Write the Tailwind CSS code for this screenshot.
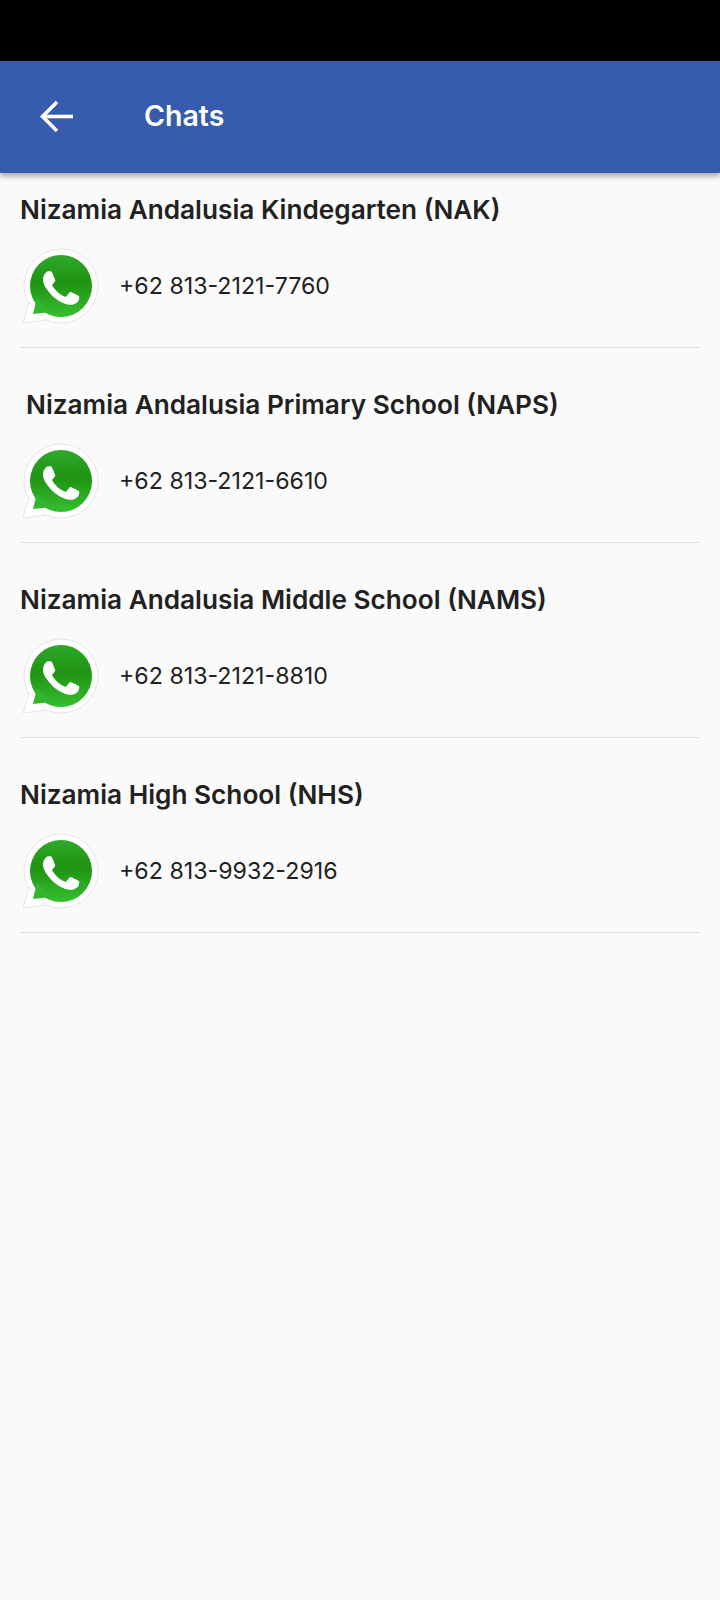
<!DOCTYPE html>
<html lang="en">
<head>
  <meta charset="UTF-8" />
  <meta name="viewport" content="width=device-width, initial-scale=1.0" />
  <title>Chats</title>
  <script src="https://cdn.jsdelivr.net/npm/@tailwindcss/browser@4"></script>
</head>
<body class="bg-[#fafafa] min-h-screen font-['Inter',sans-serif]">
  <svg width="0" height="0" class="absolute">
    <defs>
      <linearGradient id="wa-green" gradientUnits="userSpaceOnUse" x1="0" y1="9" x2="0" y2="71">
        <stop offset="0" stop-color="#2fa82a" />
        <stop offset="0.45" stop-color="#1f9312" />
        <stop offset="1" stop-color="#36bf31" />
      </linearGradient>
      <symbol id="wa" viewBox="0 0 80 80">
        <!-- white outer bubble -->
        <circle cx="41" cy="40" r="37" fill="#ffffff" stroke="#e6e6e6" stroke-width="1" />
        <path d="M3 77 L9 56 L26 74 Z" fill="#ffffff" stroke="#e6e6e6" stroke-width="1" stroke-linejoin="round" />
        <circle cx="41" cy="40" r="34" fill="#ffffff" />
        <path d="M10 60 L22 72 L8 74 Z" fill="#ffffff" />
        <!-- green bubble -->
        <circle cx="41" cy="40" r="31" fill="url(#wa-green)" />
        <path d="M13 68 L17 52 L31 66 Z" fill="#32b62d" />
        <g transform="translate(5 6) scale(3)">
          <path fill="#ffffff" d="M17.472 14.382c-.297-.149-1.758-.867-2.03-.967-.273-.099-.471-.148-.67.15-.197.297-.767.966-.94 1.164-.173.199-.347.223-.644.075-.297-.15-1.255-.463-2.39-1.475-.883-.788-1.48-1.761-1.653-2.059-.173-.297-.018-.458.13-.606.134-.133.298-.347.446-.52.149-.174.198-.298.298-.497.099-.198.05-.371-.025-.52-.075-.149-.669-1.612-.916-2.207-.242-.579-.487-.5-.669-.51-.173-.008-.371-.01-.57-.01-.198 0-.52.074-.792.372-.272.297-1.04 1.016-1.04 2.479 0 1.462 1.065 2.875 1.213 3.074.149.198 2.096 3.2 5.077 4.487.709.306 1.262.489 1.694.625.712.227 1.36.195 1.871.118.571-.085 1.758-.719 2.006-1.413.248-.694.248-1.289.173-1.413-.074-.124-.272-.198-.57-.347z" />
        </g>
      </symbol>
    </defs>
  </svg>

  <div class="h-[61px] bg-black"></div>

  <header class="h-[112px] bg-[#385cad] flex items-center shadow-[0_3px_6px_rgba(0,0,0,0.35)] relative">
    <svg class="ml-[40px] mb-[2px] w-[33px] h-[33px]" viewBox="0 0 33 33" fill="none" stroke="#ffffff" stroke-width="3.6">
      <path d="M33 16.5 H2.5" />
      <path d="M17 2 L2.5 16.5 L17 31" />
    </svg>
    <h1 class="ml-[71px] mb-[1px] text-[28.5px] font-semibold text-white leading-none">Chats</h1>
  </header>

  <main class="px-[20px]">
    <section class="h-[175px] border-b border-[#dcdcdc]">
      <h2 class="text-[26.2px] font-semibold text-[#212121] leading-[36px] pt-[19px] h-[54px]">Nizamia Andalusia Kindegarten (NAK)</h2>
      <div class="flex items-center mt-[19px]">
        <svg class="w-[80px] h-[80px]"><use href="#wa" /></svg>
        <span class="ml-[19px] text-[23.2px] text-[#212121]">+62 813-2121-7760</span>
      </div>
    </section>
    <section class="h-[195px] border-b border-[#dcdcdc] pt-[20px]">
      <h2 class="text-[26.2px] font-semibold text-[#212121] leading-[36px] pl-[6px] pt-[19px] h-[54px]">Nizamia Andalusia Primary School (NAPS)</h2>
      <div class="flex items-center mt-[19px]">
        <svg class="w-[80px] h-[80px]"><use href="#wa" /></svg>
        <span class="ml-[19px] text-[23.2px] text-[#212121]">+62 813-2121-6610</span>
      </div>
    </section>
    <section class="h-[195px] border-b border-[#dcdcdc] pt-[20px]">
      <h2 class="text-[26.2px] font-semibold text-[#212121] leading-[36px] pt-[19px] h-[54px]">Nizamia Andalusia Middle School (NAMS)</h2>
      <div class="flex items-center mt-[19px]">
        <svg class="w-[80px] h-[80px]"><use href="#wa" /></svg>
        <span class="ml-[19px] text-[23.2px] text-[#212121]">+62 813-2121-8810</span>
      </div>
    </section>
    <section class="h-[195px] border-b border-[#dcdcdc] pt-[20px]">
      <h2 class="text-[26.2px] font-semibold text-[#212121] leading-[36px] pt-[19px] h-[54px]">Nizamia High School (NHS)</h2>
      <div class="flex items-center mt-[19px]">
        <svg class="w-[80px] h-[80px]"><use href="#wa" /></svg>
        <span class="ml-[19px] text-[23.2px] text-[#212121]">+62 813-9932-2916</span>
      </div>
    </section>
  </main>
</body>
</html>
